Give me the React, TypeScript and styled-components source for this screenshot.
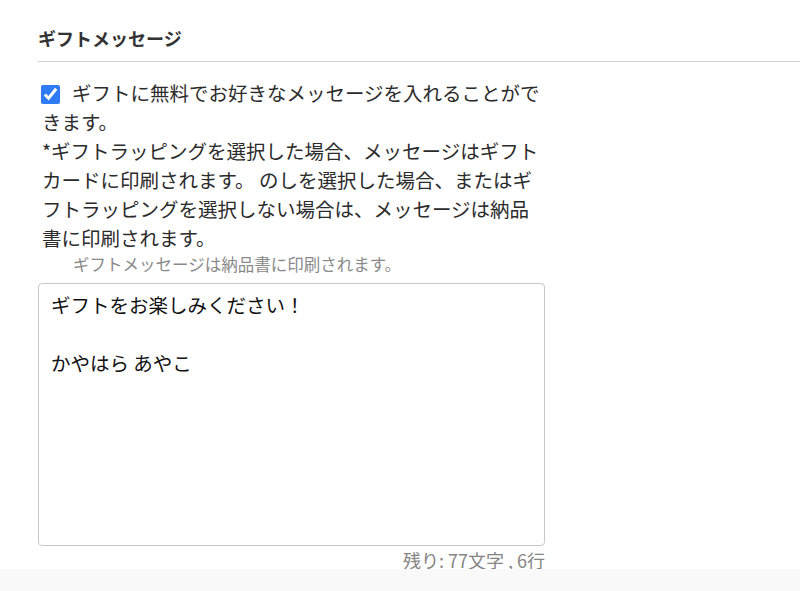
import styled, { createGlobalStyle } from "styled-components"

const GlobalStyle = createGlobalStyle`
    html, body {
        margin: 0;
        padding: 0;
        background: #ffffff;
    }
    body {
        font-family: "Noto Sans CJK JP", "Noto Sans", sans-serif;
        color: #333;
    }
`

const Page = styled.div`
    min-height: 100vh;
    display: flex;
    flex-direction: column;
`
const Section = styled.section`
    padding: 24px 0 0 38px;
`
const Header = styled.div`
    padding-bottom: 9px;
    border-bottom: 1px solid #cfcfcf;
`
const Title = styled.h2`
    margin: 0;
    font-size: 18px;
    line-height: 28px;
    font-weight: 700;
    color: #333;
`
const Body = styled.div`
    width: 507px;
    margin-top: 16px;
    display: flex;
    flex-direction: column;
`
const Label = styled.label`
    display: block;
    padding-left: 4px;
    font-size: 19.5px;
    line-height: 29px;
    color: #2b2b2b;
`
const CheckBox = styled.input`
    width: 19px;
    height: 19px;
    margin: 0 12px 0 -1px;
    vertical-align: -3px;
    accent-color: #2f7bf5;
`
const Note = styled.div`
    padding-left: 35px;
    font-size: 16.5px;
    line-height: 24px;
    color: #8a8a8a;
`
const MessageBox = styled.textarea`
    box-sizing: border-box;
    width: 100%;
    height: 263px;
    margin-top: 7px;
    padding: 6px 12px;
    border: 1px solid #c8c8c8;
    border-radius: 4px;
    font-family: inherit;
    font-size: 19.5px;
    line-height: 29px;
    color: #111;
    resize: none;
    outline: none;
`
const Counter = styled.div`
    margin-top: 5px;
    text-align: right;
    font-size: 18px;
    line-height: 18px;
    color: #858585;
`
const Footer = styled.div`
    flex: 1;
    background: #f9f9f9;
`

const message = "ギフトをお楽しみください！\n\nかやはら あやこ"

const App = () => {
    return <Page>
        <GlobalStyle />
        <Section>
            <Header>
                <Title>ギフトメッセージ</Title>
            </Header>
            <Body>
                <Label>
                    <CheckBox type="checkbox" defaultChecked />
                    ギフトに無料でお好きなメッセージを入れることができます。
                    <br />
                    *ギフトラッピングを選択した場合、メッセージはギフトカードに印刷されます。 のしを選択した場合、またはギフトラッピングを選択しない場合は、メッセージは納品書に印刷されます。
                </Label>
                <Note>ギフトメッセージは納品書に印刷されます。</Note>
                <MessageBox defaultValue={message} />
                <Counter>残り: 77文字 , 6行</Counter>
            </Body>
        </Section>
        <Footer />
    </Page>
}

export default App
